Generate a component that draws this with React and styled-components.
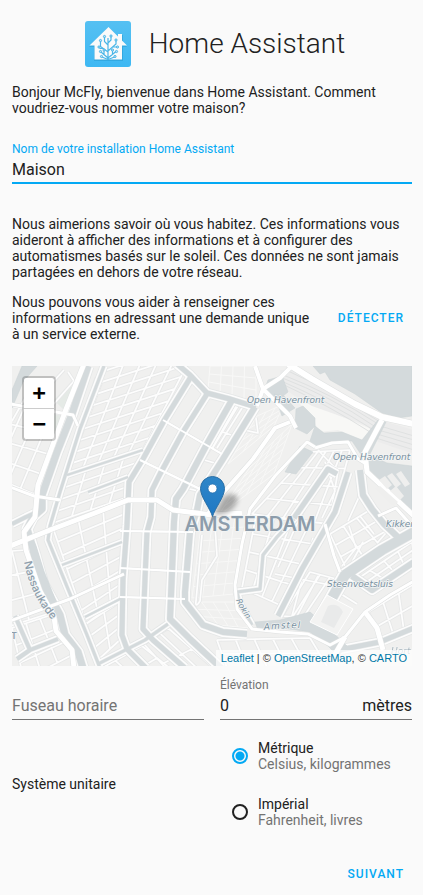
import React, { useState } from "react";
import styled, { createGlobalStyle } from "styled-components";

const PRIMARY = "#03a9f4";
const TEXT = "#212121";
const MUTED = "#737373";

const GlobalStyle = createGlobalStyle`
  *, *::before, *::after { box-sizing: border-box; }
  body {
    margin: 0;
    background: #fafafa;
    color: ${TEXT};
    font-family: Roboto, "Noto Sans", sans-serif;
    font-size: 14px;
    line-height: 16px;
  }
`;

const Page = styled.form`
  display: flex;
  flex-direction: column;
  padding: 21px 11px 8px 12px;
`;

const Header = styled.header`
  display: flex;
  align-items: center;
  justify-content: center;
  gap: 18px;
  padding-left: 6px;
  margin-bottom: 17px;
`;

const Logo = styled.svg`
  width: 46px;
  height: 46px;
  flex: none;
`;

const Title = styled.h1`
  margin: 0;
  font-size: 28px;
  line-height: 32px;
  font-weight: 300;
`;

const Paragraph = styled.p`
  margin: 0;
  flex: 1;
`;

const Field = styled.div`
  flex: 1;
  min-width: 0;
  display: flex;
  flex-direction: column;
  margin: ${(p) => (p.$spaced ? "23px 0 32px" : "0")};
`;

const FieldLabel = styled.label`
  min-height: 20px;
  font-size: 12px;
  line-height: 20px;
  color: ${(p) => (p.$active ? PRIMARY : MUTED)};
`;

const InputLine = styled.div`
  display: flex;
  align-items: center;
  padding-bottom: ${(p) => (p.$active ? 1 : 2)}px;
  border-bottom: ${(p) => (p.$active ? `2px solid ${PRIMARY}` : `1px solid ${MUTED}`)};
  font-size: 16px;
  line-height: 22px;
`;

const TextInput = styled.input`
  flex: 1;
  min-width: 0;
  height: 22px;
  padding: 0;
  border: 0;
  outline: 0;
  background: transparent;
  color: inherit;
  font: inherit;
  &::placeholder { color: ${MUTED}; opacity: 1; }
`;

const DetectRow = styled.div`
  display: flex;
  align-items: center;
  gap: 16px;
  margin: 14px 0 24px;
`;

const TextButton = styled.button`
  padding: 0 8px;
  height: 36px;
  border: 0;
  background: transparent;
  color: ${PRIMARY};
  font: 500 12px/36px Roboto, sans-serif;
  letter-spacing: 1px;
  text-transform: uppercase;
  cursor: pointer;
`;

const MapFrame = styled.section`
  position: relative;
  height: 300px;
  overflow: hidden;
  background: #f0f0ef;
`;

const MapDrawing = styled.svg`
  display: block;
  width: 100%;
  height: 100%;
`;

const ZoomBar = styled.div`
  position: absolute;
  top: 10px;
  left: 10px;
  display: flex;
  flex-direction: column;
  border: 2px solid rgba(0, 0, 0, 0.2);
  border-radius: 4px;
  background: #fff;
  background-clip: padding-box;
`;

const ZoomButton = styled.button`
  width: 30px;
  height: ${(p) => (p.$divided ? 31 : 30)}px;
  padding: 0;
  border: 0;
  border-bottom: ${(p) => (p.$divided ? "1px solid #ccc" : "0")};
  background: transparent;
  color: #000;
  font: bold 22px/30px "DejaVu Sans Mono", monospace;
  cursor: pointer;
`;

const Attribution = styled.div`
  position: absolute;
  right: 0;
  bottom: 0;
  padding: 0 5px;
  background: rgba(255, 255, 255, 0.7);
  color: #333;
  font: 11px/16px "Liberation Sans", Arial, sans-serif;
`;

const MapLink = styled.a`
  color: #0078a8;
  text-decoration: none;
`;

const Columns = styled.div`
  display: grid;
  grid-template-columns: 1fr 1fr;
  column-gap: 16px;
  align-items: center;
  margin-top: ${(p) => p.$top}px;
`;

const RadioGroup = styled.div`
  display: flex;
  flex-direction: column;
  gap: 24px;
  padding-left: 12px;
`;

const RadioRow = styled.label`
  display: flex;
  align-items: center;
  gap: 10px;
  cursor: pointer;
`;

const Radio = styled.input`
  appearance: none;
  flex: none;
  width: 16px;
  height: 16px;
  margin: 0;
  border: 2px solid ${TEXT};
  border-radius: 50%;
  &:checked {
    border-color: ${PRIMARY};
    background: radial-gradient(circle, ${PRIMARY} 4px, transparent 5px);
  }
`;

const RadioText = styled.span`
  display: flex;
  flex-direction: column;
`;

const Secondary = styled.span`
  color: ${MUTED};
`;

const Footer = styled.footer`
  display: flex;
  justify-content: flex-end;
  margin-top: 28px;
`;

/* ---------- map data ---------- */

const WATER = "#d4dadc";

const waterAreas = [
  "M10 0L25 0L11 16L6 28L0 42L0 24Z",
  "M301 0L308 8L313 6L318 14L343 28L370 47L386 52L400 50L400 0Z",
  "M284 43L291 40L303 52L303 60L295 68L283 62Z",
  "M303 60L312 67L330 66L350 74L366 54L374 56L358 88L350 90L340 75L318 76L303 81L298 75Z",
  "M288 80L301 86L284 108L273 106Z",
  "M360 90L375 97L400 100L400 146L362 108L352 98Z",
  "M256 14L270 10L276 26L266 34L252 25Z",
  "M270 50L283 42L272 30L262 28Z",
  "M15 160L24 180L32 205L42 230L46 240L36 238L26 222L20 198Z",
  "M243 256L268 254L298 246L312 258L335 280L326 290L316 280L298 266L270 262L246 264Z",
];

const canals = [
  [7, "M76 0L60 48L45 86L30 129L30 143L21 151L15 163L23 189L31 218L41 236L48 249L53 269L66 286L71 302"],
  [3, "M92 0L68 63L48 126L38 160L36 174L56 223L75 269L88 302"],
  [5, "M165 -2L178 9L195 27L218 33L244 41"],
  [5, "M180 9L153 53L131 93L117 116L115 159L111 213L110 269L115 283L134 302"],
  [5, "M195 28L171 66L148 108L140 124L139 151L135 166L133 213L131 263L141 274L173 302"],
  [6, "M220 34L195 78L171 123L164 133L162 156L160 206L158 253L178 273L209 302"],
  [6, "M243 41L211 93L188 129L185 144L178 166L173 226L173 236L191 259L211 266L235 268"],
  [3, "M86 298L133 274L156 258"],
  [4, "M3 250L18 284L5 293M18 284L46 273"],
  [2, "M50 199L110 176M73 251L110 232M55 109L131 84M76 126L116 111"],
  [5, "M282 152L316 103L325 108"],
  [5, "M336 106L323 146L290 203L266 250"],
  [6, "M348 104L351 129L360 143L372 158L390 175"],
  [10, "M303 262L333 209L370 184L402 166"],
  [6, "M340 210L360 224L402 196"],
  [5, "M327 284L368 276L402 262"],
  [3, "M282 153L265 171L251 189L248 223L225 226L228 238L240 259"],
  [4, "M0 158L14 151L25 146"],
];

const majorRoads = [
  [5, "M72 -2L53 46L26 119L23 151L12 166L14 184L28 225L42 251L44 265L60 284L62 302"],
  [5, "M-2 180L38 164L83 147L116 134L145 134L161 144L200 149L230 147"],
  [3, "M-2 38L61 49L66 60M-2 121L22 130L48 134"],
  [3, "M-2 255L58 233L112 208"],
  [4, "M278 56L263 62L241 93L211 127L196 148"],
  [3, "M303 81L295 76L263 110L238 143L230 178L223 219L225 243L240 263L268 266L296 268L318 279L333 271L353 246L378 229L402 215"],
  [5, "M353 246L365 262L371 284M333 271L322 290"],
  [6, "M276 -2L300 13L343 38L370 51L402 58"],
  [5, "M370 54L353 86L355 106L402 150"],
  [4, "M243 0L251 23L268 12L280 0M251 23L278 50L284 62M251 23L245 40"],
  [3, "M303 82L320 77L336 76L346 93L354 98"],
  [3, "M366 150L384 142L400 160M313 158L322 190L328 206"],
];

const minorRoads = [
  "M151 54L210 88M128 94L188 123M108 165L181 166M108 202L178 206M108 231L173 233",
  "M205 82L235 34M227 38L200 83M232 64L246 67L244 52M190 169L184 235Q183 243 188 235L190 214L205 190L203 160",
  "M263 208L313 218L345 238M290 146L266 201M301 172L280 250M306 210L284 252",
  "M313 96L323 125L310 152M306 84L326 105L320 140M352 120L336 155",
  "M0 55L20 20M40 40L62 15L56 6M28 30L52 4M62 50L52 75",
  "M330 200L344 182L337 160M351 176L340 196M362 168L348 150M380 160L366 176",
];

const districts = [
  [[92, 5], [188, -26], [131, 84], [55, 109], 9, 5],
  [[55, 110], [131, 84], [116, 131], [41, 157], 4, 4],
  [[41, 162], [116, 133], [111, 230], [74, 258], 7, 3],
  [[74, 258], [110, 234], [110, 272], [86, 294], 3, 2],
  [[-2, 40], [54, 49], [22, 128], [-32, 106], 4, 4],
  [[-14, 186], [14, 184], [42, 246], [-8, 262], 3, 2],
  [[0, 262], [42, 248], [62, 288], [12, 314], 3, 3],
  [[72, 52], [84, 12], [91, 12], [76, 52], 3, 2],
  [[132, 278], [156, 262], [204, 304], [168, 318], 2, 3],
  [[90, 302], [130, 280], [160, 304], [120, 330], 2, 3],
  [[226, 37], [241, 43], [190, 126], [174, 122], 3, 1],
  [[298, 86], [338, 84], [318, 158], [240, 148], 4, 5],
  [[244, 150], [316, 158], [270, 240], [230, 222], 4, 4],
  [[318, 168], [358, 144], [388, 172], [334, 202], 3, 3],
  [[344, 214], [400, 176], [402, 192], [362, 220], 2, 4],
  [[356, 246], [402, 218], [402, 260], [372, 276], 2, 3],
  [[298, 206], [328, 214], [302, 252], [270, 250], 1, 3],
  [[205, 274], [298, 272], [316, 302], [215, 302], 2, 5],
];

const oldTown = [
  [[190, 152], [234, 150], [222, 228], [180, 232], 7, 4],
  [[244, 92], [280, 58], [262, 108], [206, 150], 6, 4],
  [[178, 236], [224, 236], [236, 262], [196, 258], 3, 4],
  [[245, 50], [272, 38], [262, 60], [216, 98], 4, 3],
  [[198, 0], [244, 0], [244, 36], [196, 24], 3, 4],
];

const mix = (a, b, t) => [a[0] + (b[0] - a[0]) * t, a[1] + (b[1] - a[1]) * t];
const at = (p) => `${Math.round(p[0] * 10) / 10} ${Math.round(p[1] * 10) / 10}`;

/* Street mesh of a four-cornered district, split into rows and columns. */
function mesh([tl, tr, br, bl, rows, cols]) {
  let d = "";
  for (let i = 0; i <= rows; i += 1) {
    d += `M${at(mix(tl, bl, i / rows))}L${at(mix(tr, br, i / rows))}`;
  }
  for (let j = 0; j <= cols; j += 1) {
    d += `M${at(mix(tl, tr, j / cols))}L${at(mix(bl, br, j / cols))}`;
  }
  return d;
}

function Strokes({ items, color, extra = 0 }) {
  return items.map(([width, d]) => (
    <path key={d} d={d} stroke={color} strokeWidth={width + extra} />
  ));
}

function CityMap() {
  const streets = districts.map(mesh).join("") + minorRoads.join("");
  const alleys = oldTown.map(mesh).join("");
  return (
    <MapDrawing viewBox="0 0 400 300" preserveAspectRatio="xMidYMid slice" role="img" aria-label="Amsterdam">
      <defs>
        <path id="nassau" d="M12 196Q19 231 41 255" />
        <path id="rokin" d="M224 234Q229 247 240 259" />
        <path id="amstel" d="M252 264Q271 262 290 262" />
        <linearGradient id="pin" x1="0" y1="0" x2="0" y2="1">
          <stop offset="0" stopColor="#2e86c8" />
          <stop offset="1" stopColor="#1f78c4" />
        </linearGradient>
        <filter id="soft" x="-50%" y="-50%" width="200%" height="200%">
          <feGaussianBlur stdDeviation="2.500" />
        </filter>
      </defs>
      <rect width="400" height="300" fill="#f0f0ef" />
      <path d="M42 34L57 19L62 24L53 45ZM43 47L51 50L44 66L38 62Z" fill="#e5eae6" />
      <g fill="none" strokeLinejoin="round">
        <path d={alleys} stroke="#f8f8f7" strokeWidth="1" />
        <path d={streets} stroke="#e7e8e8" strokeWidth="3.500" />
        <path d={streets} stroke="#fdfdfd" strokeWidth="1.700" />
        <Strokes items={canals} color="#e4e6e6" extra={5.5} />
        <Strokes items={canals} color="#fdfdfd" extra={4} />
        <Strokes items={canals} color="#ebecec" extra={1} />
      </g>
      <path d="M280 30L300 38L366 66L350 74L326 64L306 66L302 52L290 40Z" fill="#f8f8f6" />
      <path d="M268 4L284 4L343 36L368 54L402 64L402 88L366 76L356 60L300 40L270 22Z" fill="#ececec" />
      <g fill="none" stroke="#dfe1e1" strokeWidth="1">
        <path d="M269 8Q320 28 366 58M268 11Q320 31 362 60M267 14Q318 36 360 63M268 17Q318 40 358 66M274 4Q320 25 368 56M368 60L402 70M366 64L402 74M365 68L402 79M364 72L402 84" />
      </g>
      <g fill={WATER} stroke="#cbd2d5" strokeWidth="0.5">
        {waterAreas.map((d) => <path key={d} d={d} />)}
      </g>
      <g fill="none" strokeLinejoin="round">
        <Strokes items={canals} color={WATER} />
        <path d="M108 165L181 166M108 202L178 206M108 231L173 233M151 54L210 88M128 94L188 123" stroke="#fff" strokeWidth="2" />
        <Strokes items={majorRoads} color="#dfe1e1" extra={1} />
        <Strokes items={majorRoads} color="#fff" />
      </g>
      <path d="M315 229L341 243L325 269L298 256Z" fill="#f3f3f2" stroke="#fff" strokeWidth="1" />
      <path d="M316 240Q326 236 331 246L322 262L309 256Z" fill="#e9eaea" />
      <g fill="#efefee">
        <path d="M367 114L373 110L380 119L375 123ZM375 110L380 107L389 118L384 122ZM384 108L389 105L398 118L393 121ZM378 125L384 120L392 130L388 134ZM363 122L368 120L386 136L382 140Z" />
      </g>
      <g fontFamily="'DejaVu Sans', sans-serif" fontSize="9" fontStyle="italic" fill="#7890a0" stroke="#f3f5f5" strokeWidth="1.5" paintOrder="stroke" strokeLinejoin="round">
        <text x="235" y="37">Open Havenfront</text>
        <text x="321" y="94">Open Havenfront</text>
        <text x="374" y="161">Kikker</text>
        <text x="315" y="221">Steenvoetsluis</text>
        <text x="379" y="288" opacity="0.6">Hort</text>
        <text fontSize="8"><textPath href="#rokin">Rokin</textPath></text>
        <text letterSpacing="1"><textPath href="#amstel">Amstel</textPath></text>
      </g>
      <g fontFamily="Inter, sans-serif" fill="#8d9dab" stroke="#f3f5f5" strokeWidth="1.5" paintOrder="stroke">
        <text fontSize="11" fontWeight="500"><textPath href="#nassau">Nassaukade</textPath></text>
        <text x="-1" y="273" fontSize="9" fontWeight="600">T</text>
        <text x="238" y="165" textAnchor="middle" fontSize="20" fontWeight="600">AMSTERDAM</text>
      </g>
      <path d="M201 150L211 132Q220 124 226 132Q225 141 215 147Z" fill="#000" opacity="0.3" filter="url(#soft)" />
      <path d="M200.500 150.500C198 142 188.500 131 188.500 122.500A12 12 0 0 1 212.500 122.500C212.500 131 203 142 200.500 150.500Z" fill="url(#pin)" stroke="#2a6fa5" strokeWidth="1" />
      <circle cx="200.500" cy="122.500" r="4.500" fill="#fff" stroke="#256fae" strokeWidth="0.8" />
    </MapDrawing>
  );
}

const branches =
  "M23 39V17M23 24L19.500 20.500V16M23 22L26 19V15.500M23 31L15.500 25.500V20M18.500 27.500H14.500M23 30L31 23V19.500M28 26H32.500M23 37L16 31M19 33.500V29.500M23 37L31 30.500M27.500 33.500V29.500M23 38.500L17 36M23 38.500L29.500 36";
const nodes = [
  [19.5, 15.5], [26, 15], [15.5, 19.5], [31, 19], [14, 26], [32.5, 26],
  [15.5, 30.5], [31.5, 30.5], [19, 29], [27.5, 29], [16.5, 35.5], [30, 35.5],
];

function HomeAssistantLogo() {
  return (
    <Logo viewBox="0 0 46 46" aria-hidden="true">
      <defs>
        <linearGradient id="tile" x1="0" y1="0" x2="0" y2="1">
          <stop offset="0" stopColor="#55c0f2" />
          <stop offset="1" stopColor="#3db8f3" />
        </linearGradient>
      </defs>
      <rect width="46" height="46" rx="3" fill="url(#tile)" />
      <path d="M23 7L4 26H9V40H38V26H42L38 21V14H33V17Z" fill="#269bd2" opacity="0.55" />
      <path d="M23.500 6L4.500 24.500H9.500V38.500H37V24.500H42L37 19.500V13H33V15.500Z" fill="#fafafa" />
      <path d={branches} fill="none" stroke="#49b6e8" strokeWidth="1.2" />
      <g fill="#b9e2f6" stroke="#49b6e8" strokeWidth="1">
        {nodes.map(([x, y]) => <circle key={`${x}-${y}`} cx={x} cy={y} r="1.1" />)}
      </g>
    </Logo>
  );
}

const unitSystems = [
  { id: "metric", name: "Métrique", detail: "Celsius, kilogrammes" },
  { id: "imperial", name: "Impérial", detail: "Fahrenheit, livres" },
];

export default function App() {
  const [name, setName] = useState("Maison");
  const [elevation, setElevation] = useState("0");
  const [units, setUnits] = useState("metric");

  return (
    <>
      <GlobalStyle />
      <Page onSubmit={(e) => e.preventDefault()}>
        <Header>
          <HomeAssistantLogo />
          <Title>Home Assistant</Title>
        </Header>
        <Paragraph>
          Bonjour McFly, bienvenue dans Home Assistant. Comment voudriez-vous nommer votre maison?
        </Paragraph>
        <Field $spaced>
          <FieldLabel htmlFor="name" $active>Nom de votre installation Home Assistant</FieldLabel>
          <InputLine $active>
            <TextInput id="name" value={name} onChange={(e) => setName(e.target.value)} />
          </InputLine>
        </Field>
        <Paragraph>
          Nous aimerions savoir où vous habitez. Ces informations vous aideront à afficher des
          informations et à configurer des automatismes basés sur le soleil. Ces données ne sont
          jamais partagées en dehors de votre réseau.
        </Paragraph>
        <DetectRow>
          <Paragraph>
            Nous pouvons vous aider à renseigner ces informations en adressant une demande unique à
            un service externe.
          </Paragraph>
          <TextButton type="button">Détecter</TextButton>
        </DetectRow>
        <MapFrame>
          <CityMap />
          <ZoomBar>
            <ZoomButton type="button" $divided>+</ZoomButton>
            <ZoomButton type="button">−</ZoomButton>
          </ZoomBar>
          <Attribution>
            <MapLink href="#leaflet">Leaflet</MapLink> | © <MapLink href="#osm">OpenStreetMap</MapLink>,
            © <MapLink href="#carto">CARTO</MapLink>
          </Attribution>
        </MapFrame>
        <Columns $top={9}>
          <Field>
            <FieldLabel as="span" />
            <InputLine>
              <TextInput aria-label="Fuseau horaire" placeholder="Fuseau horaire" />
            </InputLine>
          </Field>
          <Field>
            <FieldLabel htmlFor="elevation">Élévation</FieldLabel>
            <InputLine>
              <TextInput
                id="elevation"
                inputMode="numeric"
                value={elevation}
                onChange={(e) => setElevation(e.target.value)}
              />
              <span>mètres</span>
            </InputLine>
          </Field>
        </Columns>
        <Columns $top={20}>
          <span id="units">Système unitaire</span>
          <RadioGroup role="radiogroup" aria-labelledby="units">
            {unitSystems.map((u) => (
              <RadioRow key={u.id}>
                <Radio
                  type="radio"
                  name="units"
                  checked={units === u.id}
                  onChange={() => setUnits(u.id)}
                />
                <RadioText>
                  {u.name}
                  <Secondary>{u.detail}</Secondary>
                </RadioText>
              </RadioRow>
            ))}
          </RadioGroup>
        </Columns>
        <Footer>
          <TextButton type="submit">Suivant</TextButton>
        </Footer>
      </Page>
    </>
  );
}
